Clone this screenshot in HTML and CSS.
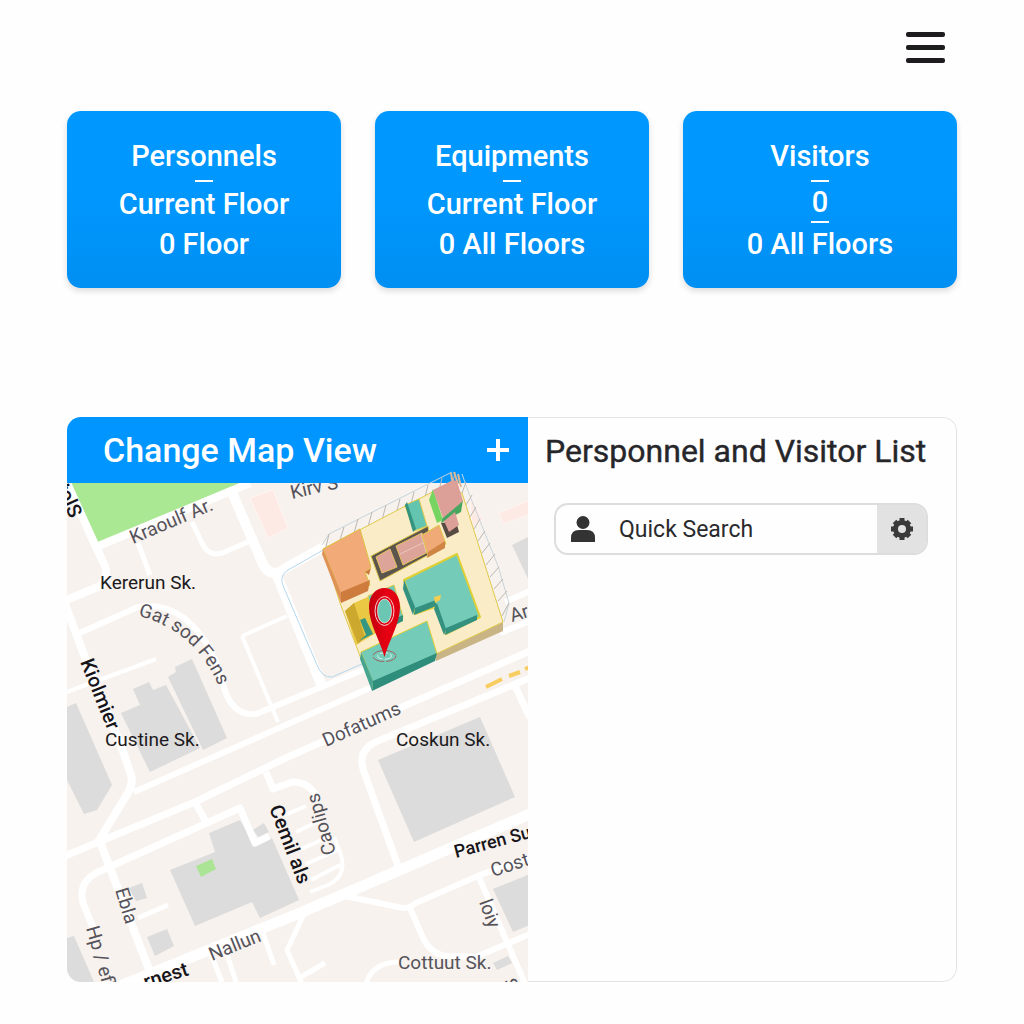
FILE: index.html
```html
<!DOCTYPE html>
<html lang="en">
<head>
<meta charset="utf-8">
<meta name="viewport" content="width=device-width, initial-scale=1">
<title>Floor Tracking</title>
<link rel="stylesheet" href="styles.css">
</head>
<body>
<div class="page">
  <header class="topbar">
    <button class="menu" type="button" aria-label="Menu"><span></span><span></span><span></span></button>
  </header>

  <main>
    <section class="stats">
      <article class="card">
        <h2>Personnels</h2>
        <hr>
        <p>Current Floor</p>
        <p>0 Floor</p>
      </article>
      <article class="card">
        <h2>Equipments</h2>
        <hr>
        <p>Current Floor</p>
        <p>0 All Floors</p>
      </article>
      <article class="card">
        <h2>Visitors</h2>
        <hr>
        <p class="count">0</p>
        <hr class="tight">
        <p>0 All Floors</p>
      </article>
    </section>

    <section class="panel">
      <div class="mapside">
        <div class="maphead">
          <h2>Change Map View</h2>
          <button class="add" type="button" aria-label="Add map view">
            <svg viewBox="0 0 24 24" width="24" height="24"><path d="M12 1V23M1 12H23" stroke="#fff" stroke-width="4"/></svg>
          </button>
        </div>
        <svg class="map" viewBox="67 483 461 499" role="img" aria-label="Campus map">
          <defs>
            <path id="arc" d="M138 616C172 624 204 646 222 694"/>
            <linearGradient id="pin" x1="0" y1="0" x2="1" y2="0"><stop offset="0" stop-color="#c4000f"/><stop offset=".6" stop-color="#e60012"/><stop offset="1" stop-color="#dc0010"/></linearGradient>
          </defs>
          <svg x="67" y="483" width="461" height="499" viewBox="67 483 461 499">
            <rect x="67" y="483" width="461" height="499" fill="#f7f2ed"/>
            <g class="blocks">
              <path d="M67 707L76 703L112 785L97 810L84 814L67 780Z"/>
              <path d="M133 689L149 682L153 690L166 685L200 748L150 772L121 713L140 705Z"/>
              <path d="M168 677L176 672L175 667L192 659L227 738L203 750Z"/>
              <path d="M209 833L240 820L255 845L272 838L299 900L260 918L252 902L195 926L170 870L215 852Z"/>
              <path d="M253 830L264 823L269 832L260 839Z"/>
              <path d="M129 888L142 883L147 898L136 901Z"/>
              <path d="M147 937L167 929L174 946L155 956Z"/>
              <path d="M67 938L74 936L94 982H67Z"/>
              <path d="M378 760L480 717L515 797L414 842Z"/>
              <path d="M493 889L530 874V925L513 932Z"/>
              <path d="M493 963L508 956L512 963L497 970Z"/>
              <path d="M512 545L530 536V583Z"/>
            </g>
            <path d="M71 483L98 543L240 483Z" fill="#abe894"/>
            <path d="M196 866L212 859L216 869L201 877Z" fill="#abe494"/>
            <g fill="#fdeae5" stroke="#fff5f2">
              <path d="M250 498L273 490L288 528L268 538Z"/>
              <path d="M499 513L530 500V514L503 524Z"/>
              <path d="M470 495L483 520L472 527Z"/>
            </g>
            <g class="roads">
              <path stroke-width="8" d="M67 483L96 547L250 483M96 547L105 566Q109 578 100 586L62 602"/>
              <path stroke-width="8" d="M62 596L86 660L121 745L131 775Q134 784 126 796L98 842M100 842L155 985"/>
              <path stroke-width="10" d="M231 490L262 562Q267 574 277 573L325 546M276 573L321 684"/>
              <path stroke-width="5" d="M192 522L202 543Q208 557 222 553L248 542M138 543L150 575"/>
              <path stroke-width="6" d="M75 635L138 607C180 600 210 636 222 680Q230 717 256 714L365 669"/>
              <path stroke-width="4" d="M67 692L156 659M242 636L287 616M242 636L278 722"/>
              <path stroke-width="6" d="M134 792L372 687M500 633L530 621M505 602L530 591"/>
              <path stroke-width="7" d="M60 858L195 802L290 756L530 651"/>
              <path stroke-width="7" d="M530 678L378 741Q356 750 364 772L398 866M515 686L530 718"/>
              <path stroke-width="7" d="M94 930L83 903Q78 883 96 873L240 808L255 843L269 836M195 802L206 822M266 772L273 789L292 782Q311 782 318 800"/>
              <path stroke-width="11" d="M120 986L300 913L530 814"/>
              <path stroke-width="5" d="M138 918L168 905M210 952L222 982M225 948L236 982M262 930L274 965M304 914L287 950L302 984M299 978L325 963M366 984Q372 962 400 962"/>
              <path stroke-width="6" d="M345 896L398 907Q407 910 416 903L480 875L530 857M410 908L424 940Q434 958 454 956L476 957L530 934M478 875L526 986"/>
              <path stroke-width="4" d="M285 815L306 806M296 832L321 820M301 849L329 837M306 864L338 850M311 880L340 865M310 892L328 885Q347 876 341 855L334 837"/>
            </g>
            <path d="M325 549L288 570Q278 576 284 588L317 665Q322 678 332 677L362 664" fill="none" stroke="#b4d7ee"/>
            <path d="M486 687L502 679M509 676L520 672M525 669L530 667" fill="none" stroke="#f7cd60" stroke-width="4"/>
            <g class="lab thin">
              <text transform="translate(133 544) rotate(-23)">Kraoulf Ar.</text>
              <text transform="translate(292 499) rotate(-13)">Kirv S</text>
              <text><textPath href="#arc">Gat sod Fens</textPath></text>
              <text transform="translate(326 747) rotate(-24)">Dofatums</text>
              <text transform="translate(512 622) rotate(-17)">Ar</text>
              <text transform="translate(493 877) rotate(-18)">Cost</text>
              <text x="398" y="969">Cottuut Sk.</text>
              <text transform="translate(212 961) rotate(-22)">Nallun</text>
              <text transform="translate(336 853) rotate(-106)">Caolips</text>
              <text transform="translate(115 890) rotate(73)">Ebla</text>
              <text transform="translate(86 928) rotate(74)">Hp / eflt</text>
              <text transform="translate(479 902) rotate(70)">loiy</text>
              <text transform="translate(519 988) rotate(-106)">S</text>
            </g>
            <g class="lab bold">
              <text transform="translate(80 662) rotate(68)">Kiolmier</text>
              <text transform="translate(56 487) rotate(66)">tolS</text>
              <text transform="translate(269 808) rotate(69)">Cemil als</text>
              <text class="road-name" transform="translate(456 858) rotate(-15)">Parren Su</text>
              <text transform="translate(146 989) rotate(-18)">rnest</text>
            </g>
            <g class="lab plain">
              <text x="100" y="589">Kererun Sk.</text>
              <text x="105" y="746">Custine Sk.</text>
              <text x="396" y="746">Coskun Sk.</text>
            </g>
          </svg>

          <g stroke-linejoin="round">
            <g fill="none" stroke="#c8d4dc">
              <path d="M322 545L329 534L452 472M462 474L468 491L498 566L509 603L504 622"/>
              <path stroke="#bcb8b1" d="M326 547L329 534M340 540L344 527M354 533L358 519M368 527L372 512M382 520L386 505M396 514L400 499M410 508L414 492M424 501L428 485M438 495L442 478M452 487L455 472M462 493L466 482M466 505L472 495M470 517L476 507M474 529L480 519M478 541L485 531M482 553L490 543M486 565L495 554M490 577L499 567M494 589L503 579M498 601L507 591M502 616L509 603"/>
              <path stroke="#deb997" stroke-width="2" d="M453 485L451 473M458 484L454 472M461 487L458 474"/>
            </g>
            <path d="M435 653L503 622V631L436 661Z" fill="#c9b486"/>
            <path d="M323 549L440 488L462 493L503 622L436 654L372 688L340 603Z" fill="#fbecc8" stroke="#dfca4a"/>
            <path d="M323 549L360 529L371 567L365 572L370 585L341 594Z" fill="#f2aa78" stroke="#dfc243"/>
            <path d="M341 592L370 580L368 591L341 603ZM365 572L371 568L369 575Z" fill="#cd7c3e"/>
            <path d="M323 549L341 593V603L322 554Z" fill="#df9257"/>
            <path d="M405 505L419 499L427 526L414 531Z" fill="#63c5af" stroke="#dfc94a"/>
            <path d="M405 505L407 502L416 529L413 532Z" fill="#34947f"/>
            <path d="M433 489L443 520L437 523L429 500Z" fill="#76d560"/>
            <path d="M443 517L463 500L461 512L441 523Z" fill="#48a660"/>
            <path d="M433 490L453 480L457 481L463 501L443 518Z" fill="#dca099"/>
            <path d="M441 523L447 538L459 532L456 521Z" fill="#574b42"/>
            <path d="M444 521L455 512L459 525L449 532Z" fill="#dca099"/>
            <path d="M371 556L428 526L432 553L380 581Z" fill="#5b554d" stroke="#dfc94a"/>
            <path d="M376 557L390 549L397 567L382 573Z" fill="#dda49a" stroke="#e7c25e"/>
            <path d="M396 546L422 533L428 552L403 565Z" fill="#dda49a" stroke="#e7c25e"/>
            <path d="M400 554L425 542M421 533L426 552" stroke="#eec7bd"/>
            <path d="M422 535L439 525L446 544L428 556Z" fill="#f0aa78" stroke="#dfc94a"/>
            <path d="M428 552L445 541V548L427 558Z" fill="#cf8543"/>
            <path d="M404 580L457 554L480 617L446 634L435 607L415 614Z" fill="#74cbb8" stroke="#dfcf35" stroke-width="2"/>
            <path d="M404 580L415 607L413 615L403 589ZM415 608L436 600V606L414 615ZM437 603L446 629L444 635L434 609ZM446 628L477 615V620L445 635Z" fill="#349180"/>
            <path d="M434 597L441 595L440 600L435 603Z" fill="#f5cd4f"/>
            <path d="M345 611L354 603L370 596L381 630L356 645Z" fill="#eac844"/>
            <path d="M345 611L354 603L365 637L358 644Z" fill="#cda82f"/>
            <path d="M368 596L394 585L403 617L376 629Z" fill="#6bc7b3" stroke="#dfc94a"/>
            <path d="M360 620L365 618L373 634L359 641L366 635Z" fill="#359681"/>
            <path d="M377 627L403 615V621L378 634Z" fill="#34907c"/>
            <path d="M361 652L427 621L437 654L373 683Z" fill="#74cbb8" stroke="#dfcf35"/>
            <path d="M361 652L373 681L372 691L360 659Z" fill="#47a58f"/>
            <path d="M373 681L437 653L435 661L372 691Z" fill="#2f8d7c"/>
          </g>
          <g class="marker">
            <g fill="none" stroke="#b23640" stroke-width=".7">
              <ellipse cx="384.5" cy="656" rx="11.5" ry="5.5" stroke-dasharray="12 2"/>
              <ellipse cx="384.5" cy="656" rx="7" ry="3.2" stroke="#fff" stroke-dasharray="8 2"/>
            </g>
            <path fill="url(#pin)" fill-rule="evenodd" d="M384.500 657C380 640 369 624 369 607C369 595 376 588 384.500 588S400 595 400 607C400 624 389 640 384.500 657ZM384.500 599C380 599 377.500 604 377.500 611S380 623 384.500 623S391.500 618 391.500 611S389 599 384.500 599Z"/>
            <ellipse cx="384.500" cy="611" rx="9.500" ry="14.500" fill="none" stroke="#fff" stroke-width=".8"/>
            <ellipse cx="384.500" cy="611" rx="7" ry="12" fill="none" stroke="#fff" stroke-width=".6"/>
          </g>
        </svg>
      </div>

      <div class="listside">
        <h2>Persponnel and Visitor List</h2>
        <form class="search" role="search">
          <label for="quick" aria-label="Quick Search">
            <svg viewBox="0 0 24 26" width="24" height="26" fill="#333"><circle cx="12" cy="6.500" r="6.500"/><path d="M0 26V22Q0 14 8 14H16Q24 14 24 22V26Z"/></svg>
          </label>
          <input id="quick" type="text" placeholder="Quick Search">
          <button type="button" aria-label="Search settings">
            <svg viewBox="-11 -11 22 22" width="22" height="22"><circle r="6.500" fill="none" stroke="#3a3a3a" stroke-width="5"/><path fill="none" stroke="#3a3a3a" stroke-width="5" d="M0 -11V-7M0 11V7M-11 0H-7M11 0H7M-7.500 -7.500L-5 -5M7.500 7.500L5 5M-7.500 7.500L-5 5M7.500 -7.500L5 -5"/></svg>
          </button>
        </form>
      </div>
    </section>
  </main>
</div>
</body>
</html>
```
FILE: styles.css
```css
* { box-sizing: border-box; }
body {
  margin: 0;
  background: #fefefe;
  color: #26262a;
  font-family: Roboto, "Liberation Sans", sans-serif;
}
h2, p { margin: 0; font-weight: 500; }
button { border: 0; padding: 0; background: none; cursor: pointer; }
svg { display: block; }

.page { padding: 32px 67px 42px; }

.topbar { display: flex; justify-content: flex-end; padding-right: 12px; }
.menu { display: grid; gap: 8px; width: 39px; }
.menu span { height: 5px; border-radius: 2px; background: #1f1c20; }

.stats {
  display: grid;
  grid-template-columns: repeat(3, 1fr);
  gap: 34px;
  margin-top: 48px;
}
.card {
  padding: 25px 0 24px;
  border-radius: 14px;
  background: linear-gradient(#0098ff 40%, #008ff2);
  box-shadow: 0 3px 6px rgba(0, 0, 0, .14);
  color: #fff;
  font-size: 29px;
  line-height: 40px;
  text-align: center;
}
.card h2 { font-size: inherit; }
.card hr { width: 18px; height: 2px; margin: 4px auto 2px; border: 0; background: #fff; }
.card .count { line-height: 36px; }
.card hr.tight { margin: 1px auto; }

.panel {
  display: grid;
  grid-template-columns: minmax(0, 461fr) minmax(0, 429fr);
  margin-top: 129px;
  border-radius: 14px;
  overflow: hidden;
}
.maphead {
  display: flex;
  align-items: center;
  justify-content: space-between;
  height: 66px;
  padding: 0 18px 0 36px;
  background: #0095ff;
  color: #fff;
}
.maphead h2 { font-size: 34px; line-height: 40px; }
.map { width: 100%; height: auto; overflow: visible; }
.blocks { fill: #dcdcdc; }
.roads { fill: none; stroke: #fff; stroke-linejoin: round; }
.lab { font-size: 19px; }
.thin { fill: #55525a; }
.bold { fill: #17151a; font-size: 20px; font-weight: 500; }
.road-name { font-size: 18px; }
.plain { fill: #1c1a20; }

.listside {
  padding: 13px 28px 0 17px;
  border: 1px solid #e3e3e6;
  border-left: 0;
  border-radius: 0 14px 14px 0;
}
.listside h2 { font-size: 32px; font-weight: 400; line-height: 40px; white-space: nowrap; -webkit-text-stroke: 0.4px currentColor; }
.search {
  display: flex;
  height: 52px;
  margin: 32px 0 0 9px;
  border: 2px solid #dcdddd;
  border-radius: 14px;
  overflow: hidden;
}
.search label { display: flex; align-items: center; padding: 0 24px 0 15px; }
.search input {
  flex: 1;
  min-width: 0;
  padding: 2px 0 0;
  border: 0;
  outline: 0;
  background: none;
  color: #222;
  font: 23px/28px Roboto, "Liberation Sans", sans-serif;
}
.search input::placeholder { color: #2a2a2d; opacity: 1; }
.search button { display: grid; place-items: center; width: 49px; background: #e2e2e2; }
```
